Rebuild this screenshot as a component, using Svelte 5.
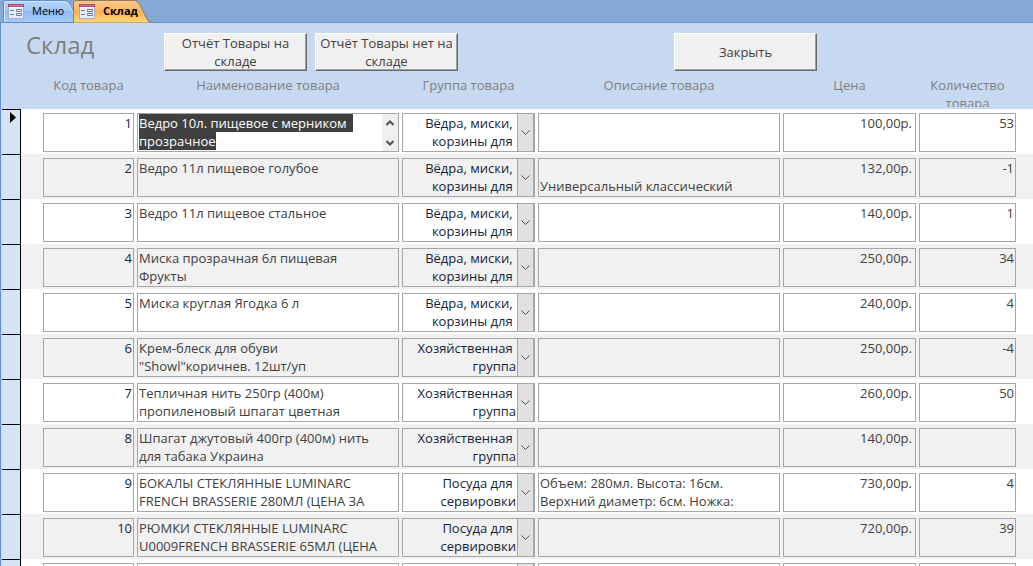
<script>
	import { onMount } from 'svelte';

	const tabs = [
		{ title: 'Меню', active: false },
		{ title: 'Склад', active: true }
	];

	const buckets = 'Вёдра, миски, \nкорзины для ';
	const household = 'Хозяйственная \nгруппа';
	const tableware = 'Посуда для \nсервировки';
	const groups = [buckets, household, tableware];

	const columns = [
		{ key: 'id', label: 'Код товара' },
		{ key: 'name', label: 'Наименование товара' },
		{ key: 'group', label: 'Группа товара' },
		{ key: 'description', label: 'Описание товара' },
		{ key: 'price', label: 'Цена' },
		{ key: 'quantity', label: 'Количество товара' }
	];

	let rows = $state([
		{ id: '1', name: 'Ведро 10л. пищевое с мерником прозрачное', group: buckets, description: '', price: '100,00р.', quantity: '53' },
		{ id: '2', name: 'Ведро 11л пищевое голубое', group: buckets, description: '\nУниверсальный классический', price: '132,00р.', quantity: '-1' },
		{ id: '3', name: 'Ведро 11л пищевое стальное', group: buckets, description: '', price: '140,00р.', quantity: '1' },
		{ id: '4', name: 'Миска прозрачная 6л пищевая\nФрукты', group: buckets, description: '', price: '250,00р.', quantity: '34' },
		{ id: '5', name: 'Миска круглая Ягодка 6 л', group: buckets, description: '', price: '240,00р.', quantity: '4' },
		{ id: '6', name: 'Крем-блеск для обуви\n"Showl"коричнев. 12шт/уп', group: household, description: '', price: '250,00р.', quantity: '-4' },
		{ id: '7', name: 'Тепличная нить 250гр (400м)\nпропиленовый шпагат цветная', group: household, description: '', price: '260,00р.', quantity: '50' },
		{ id: '8', name: 'Шпагат джутовый 400гр (400м) нить\nдля табака Украина', group: household, description: '', price: '140,00р.', quantity: '' },
		{ id: '9', name: 'БОКАЛЫ СТЕКЛЯННЫЕ LUMINARC\nFRENCH BRASSERIE 280МЛ (ЦЕНА ЗА', group: tableware, description: 'Объем: 280мл. Высота: 16см.\nВерхний диаметр: 6см. Ножка:', price: '730,00р.', quantity: '4' },
		{ id: '10', name: 'РЮМКИ СТЕКЛЯННЫЕ LUMINARC\nU0009FRENCH BRASSERIE 65МЛ (ЦЕНА', group: tableware, description: '', price: '720,00р.', quantity: '39' },
		{ id: '', name: '', group: '', description: '', price: '', quantity: '' }
	]);

	let current = $state(0);
	let table;

	onMount(() => {
		const field = table.querySelector('textarea');
		field.focus();
		field.select();
	});

	const scrollField = (event, lines) => {
		event.currentTarget.closest('.memo').querySelector('textarea').scrollTop += lines * 18;
	};
</script>

<div class="window">
	<nav class="tabs">
		{#each tabs as tab}
			<a href="#form" class="tab" class:active={tab.active} aria-current={tab.active ? 'page' : null}>
				<svg class="shape" width="80" height="23" viewBox="0 0 80 23" aria-hidden="true">
					<defs>
						<linearGradient id="blue" x1="0" y1="0" x2="0" y2="1">
							<stop offset="0" stop-color="#b4d3fb" />
							<stop offset="0.45" stop-color="#a3c8fa" />
							<stop offset="0.5" stop-color="#8dbaf6" />
							<stop offset="1" stop-color="#a9ccfa" />
						</linearGradient>
						<linearGradient id="orange" x1="0" y1="0" x2="0" y2="1">
							<stop offset="0" stop-color="#fdc88b" />
							<stop offset="0.4" stop-color="#fdba6c" />
							<stop offset="0.5" stop-color="#fdb052" />
							<stop offset="1" stop-color="#fed97b" />
						</linearGradient>
					</defs>
					{#if tab.active}
						<path d="M.5 23V3Q.5.5 3 .5H60Q65 .5 67 5L73 17Q75 22.500 79 22.500V23Z" fill="url(#orange)" stroke="#8c7a5c" />
					{:else}
						<path d="M.5 22.500V3Q.5.5 3 .5H61Q65 .5 67 5L73 17Q75 22.500 79 22.500Z" fill="url(#blue)" stroke="#5d8bd0" />
						<path d="M1.500 22V3Q1.500 1.500 3 1.500H61Q65 1.500 67 6L72 17" fill="none" stroke="#d8e8fd" />
					{/if}
				</svg>
				<svg class="icon" width="16" height="15" viewBox="0 0 16 15" aria-hidden="true">
					<path d="M.5.5H15.500V14.500H.5Z" fill="#e6edf8" stroke="#a3aecb" />
					<path d="M0 0H16V3H0Z" fill="#b04c70" />
					<path d="M1 1H15V2H1Z" fill="#c97890" />
					<path d="M1 3H15V4H1Z" fill="#fff" />
					<path d="M2 6.500H6M2 10.500H6" stroke="#6b7ba6" />
					<path d="M8.500 5.500H13.500V7.500H8.500ZM8.500 9.500H13.500V11.500H8.500Z" fill="#fff" stroke="#6b7ba6" />
				</svg>
				<span>{tab.title}</span>
			</a>
		{/each}
	</nav>

	<main id="form">
		<header>
			<h1>Склад</h1>
			<div class="reports">
				<button type="button">Отчёт Товары на складе</button>
				<button type="button">Отчёт Товары нет на складе</button>
			</div>
			<button type="button">Закрыть</button>
		</header>

		<table bind:this={table}>
			<thead>
				<tr>
					<th class="selector"></th>
					{#each columns as column}
						<th scope="col" class={column.key}><div>{column.label}</div></th>
					{/each}
				</tr>
			</thead>
			<tbody>
				{#each rows as row, i}
					<tr onfocusin={() => (current = i)}>
						<td class="selector">
							{#if current === i}
								<svg width="6" height="11" viewBox="0 0 6 11" aria-hidden="true">
									<path d="M0 0L6 5.500L0 11Z" />
								</svg>
							{/if}
						</td>
						{#each columns as { key, label }}
							<td class={key}>
								{#if key === 'group'}
									<div class="combo">
										<select aria-label={label} bind:value={row.group}>
											<option value=""></option>
											{#each groups as group}
												<option value={group}>{group}</option>
											{/each}
										</select>
										<span class="value" aria-hidden="true">{row.group}</span>
										<span class="arrow" aria-hidden="true">
											<svg width="9" height="6" viewBox="0 0 9 6">
												<path d="M.5.5L4.500 4.500L8.500.5" />
											</svg>
										</span>
									</div>
								{:else if key === 'name' || key === 'description'}
									<div class="memo">
										<textarea aria-label={label} spellcheck="false" bind:value={row[key]}></textarea>
										{#if key === 'name' && current === i}
											<div class="scroll">
												<button type="button" aria-label="Вверх" onclick={(e) => scrollField(e, -1)}>
													<svg width="8" height="6" viewBox="0 0 8 6"><path d="M.5 5L4 1.500L7.500 5" /></svg>
												</button>
												<button type="button" aria-label="Вниз" onclick={(e) => scrollField(e, 1)}>
													<svg width="8" height="6" viewBox="0 0 8 6"><path d="M.5 1L4 4.500L7.500 1" /></svg>
												</button>
											</div>
										{/if}
									</div>
								{:else}
									<input type="text" aria-label={label} bind:value={row[key]} />
								{/if}
							</td>
						{/each}
					</tr>
				{/each}
			</tbody>
		</table>
	</main>
</div>

<style>
	:global(body) {
		margin: 0;
		overflow: hidden;
	}

	.window {
		--line: #a6a6a6;
		--text: #404040;

		height: 100vh;
		overflow: hidden;
		background: #fff;
		color: var(--text);
		font: 13px/18px 'Open Sans', 'Noto Sans', sans-serif;
	}

	.window * {
		box-sizing: border-box;
	}

	button,
	input,
	select,
	textarea {
		margin: 0;
		border-radius: 0;
		color: inherit;
		font: inherit;
	}

	.tabs {
		display: flex;
		height: 23px;
		padding-left: 3px;
		border-bottom: 1px solid #6593cf;
		background: #86a8d6;
	}

	.tab {
		position: relative;
		display: flex;
		align-items: center;
		gap: 8px;
		width: 70px;
		height: 22px;
		padding-left: 5px;
		color: #000;
		font-size: 11px;
		text-decoration: none;
	}

	.tab.active {
		width: 78px;
		padding-left: 6px;
		font-weight: 700;
	}

	.shape {
		position: absolute;
		top: 0;
		left: 0;
	}

	.icon,
	.tab span {
		position: relative;
	}

	main {
		border-left: 1px solid #6593cf;
		padding-left: 1px;
		background: #c7d9f1;
	}

	header {
		display: flex;
		align-items: flex-start;
		height: 53px;
		padding: 10px 216px 0 24px;
	}

	h1 {
		width: 138px;
		margin: 0;
		color: #7f7f7f;
		font-size: 24px;
		font-weight: 400;
		line-height: 24px;
	}

	.reports {
		display: flex;
		flex: 1;
		gap: 8px;
	}

	header button {
		width: 143px;
		height: 38px;
		padding: 0;
		border: 1px solid #fff;
		border-right-color: #696969;
		border-bottom-color: #696969;
		background: #f0f0f0;
		box-shadow: inset -1px -1px #a0a0a0;
	}

	table {
		width: 100%;
		table-layout: fixed;
		border-spacing: 0;
	}

	th,
	td {
		padding: 4px 3px 2px 0;
		vertical-align: top;
	}

	th {
		padding-top: 0;
		padding-bottom: 2px;
		color: #7f7f7f;
		font-weight: 400;
		text-align: center;
	}

	th div {
		height: 31px;
		overflow: hidden;
	}

	.selector {
		width: 19px;
	}

	.id {
		width: 116px;
		padding-left: 22px;
	}

	.name {
		width: 265px;
	}

	.group,
	.price {
		width: 136px;
	}

	.quantity {
		width: 114px;
		padding-right: 17px;
	}

	tbody tr {
		background: #fff;
	}

	tbody tr:nth-child(even) {
		background: #f1f1f1;
	}

	td.selector {
		padding: 2px 0 0 8px;
		border-top: 1px solid #000;
		border-right: 1px solid #000;
		background: #d5e4f2;
	}

	.selector svg {
		display: block;
	}

	input,
	textarea,
	select {
		display: block;
		width: 100%;
		height: 39px;
		border: 1px solid var(--line);
		outline: none;
		background: transparent;
	}

	input {
		padding: 0 1px 19px;
		text-align: right;
	}

	.price input {
		padding-right: 3px;
	}

	.id,
	.combo {
		color: #14243c;
	}

	th.id {
		color: #7f7f7f;
	}

	textarea {
		padding: 0 1px;
		overflow: hidden;
		resize: none;
	}

	textarea::selection {
		background: #404040;
		color: #fff;
	}

	.memo,
	.combo {
		position: relative;
	}

	.scroll {
		position: absolute;
		top: 1px;
		right: 1px;
		bottom: 1px;
		display: flex;
		flex-direction: column;
		justify-content: space-between;
		width: 16px;
		background: #f0f0f0;
	}

	.scroll button {
		display: flex;
		align-items: center;
		justify-content: center;
		height: 17px;
		padding: 0;
		border: 0;
		background: none;
	}

	.scroll path {
		fill: none;
		stroke: #505050;
		stroke-width: 2;
	}

	select {
		appearance: none;
		color: transparent;
	}

	option {
		color: var(--text);
	}

	.value {
		position: absolute;
		top: 1px;
		right: 19px;
		text-align: right;
		white-space: pre;
		pointer-events: none;
	}

	.arrow {
		position: absolute;
		top: 0;
		right: 0;
		bottom: 0;
		display: flex;
		align-items: center;
		justify-content: center;
		width: 18px;
		border: 1px solid var(--line);
		border-right-width: 2px;
		background: #e1e1e1;
		pointer-events: none;
	}

	.arrow path {
		fill: none;
		stroke: #505050;
	}
</style>
